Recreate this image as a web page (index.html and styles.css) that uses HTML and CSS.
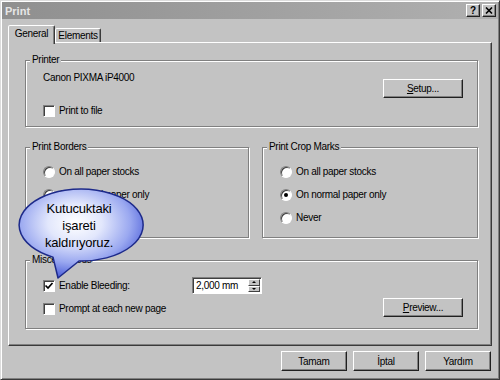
FILE: index.html
```html
<!DOCTYPE html>
<html>
<head>
<meta charset="utf-8">
<title>Print</title>
<link rel="stylesheet" href="styles.css">
</head>
<body>
<div class="window">
  <div class="titlebar">
    <span class="title">Print</span>
    <div class="caption-btns">
      <span class="cbtn help">?</span>
      <span class="cbtn close"><svg width="8" height="7" viewBox="0 0 8 7"><path d="M1 0.5L7 6.5M7 0.5L1 6.5" stroke="#000" stroke-width="1.6"/></svg></span>
    </div>
  </div>
  <div class="content">
    <div class="tabs">
      <div class="tab active">General</div>
      <div class="tab">Elements</div>
    </div>
    <div class="panel">
      <fieldset class="group printer">
        <legend>Printer</legend>
        <div class="printer-row">
          <div class="printer-info">
            <div class="printer-name">Canon PIXMA iP4000</div>
            <div class="check"><span class="box"></span><span>Print to file</span></div>
          </div>
          <button class="btn setup"><u>S</u>etup...</button>
        </div>
      </fieldset>
      <div class="group-row">
        <fieldset class="group borders">
          <legend>Print Borders</legend>
          <div class="radio-list">
            <div class="radio-row"><span class="radio"></span><span>On all paper stocks</span></div>
            <div class="radio-row"><span class="radio"></span><span>On normal paper only</span></div>
            <div class="radio-row"><span class="radio checked"></span><span>Never</span></div>
          </div>
        </fieldset>
        <fieldset class="group crop">
          <legend>Print Crop Marks</legend>
          <div class="radio-list">
            <div class="radio-row"><span class="radio"></span><span>On all paper stocks</span></div>
            <div class="radio-row"><span class="radio checked"></span><span>On normal paper only</span></div>
            <div class="radio-row"><span class="radio"></span><span>Never</span></div>
          </div>
        </fieldset>
      </div>
      <fieldset class="group misc">
        <legend>Miscellaneous</legend>
        <div class="misc-row">
          <div class="check wide"><span class="box checked"><svg width="10" height="10" viewBox="0 0 10 10"><path d="M1.5 4.5L4 7L8.5 2" stroke="#000" stroke-width="1.7" fill="none"/></svg></span><span>Enable Bleeding:</span></div>
          <div class="spinner">
            <span class="spin-value">2,000 mm</span>
            <div class="spin-btns"><span class="spin-btn up"></span><span class="spin-btn down"></span></div>
          </div>
        </div>
        <div class="misc-row second">
          <div class="check prompt"><span class="box"></span><span>Prompt at each new page</span></div>
          <button class="btn"><u>P</u>review...</button>
        </div>
      </fieldset>
    </div>
    <div class="dialog-buttons">
      <button class="btn dbtn">Tamam</button>
      <button class="btn dbtn">İptal</button>
      <button class="btn dbtn">Yardım</button>
    </div>
  </div>
  <div class="callout">
    <svg width="135" height="100" viewBox="0 0 135 100">
      <defs>
        <radialGradient id="bg" cx="0.45" cy="0.38" r="0.62">
          <stop offset="0" stop-color="#ffffff"/>
          <stop offset="0.35" stop-color="#e2e7fc"/>
          <stop offset="0.72" stop-color="#9aa8f0"/>
          <stop offset="1" stop-color="#4d5fd9"/>
        </radialGradient>
      </defs>
      <path d="M37 73.1A62 36 0 1 1 63 77L42 94Z" fill="url(#bg)" stroke="#1d2a8a" stroke-width="1.5" stroke-linejoin="round"/>
    </svg>
    <div class="callout-text">Kutucuktaki<br>işareti<br>kaldırıyoruz.</div>
  </div>
</div>
</body>
</html>
```
FILE: styles.css
```css
* { box-sizing: border-box; }
html, body { margin: 0; padding: 0; }
body {
  width: 500px;
  height: 380px;
  overflow: hidden;
  background: #c3c3c3;
  font-family: "Liberation Sans", Arial, sans-serif;
  font-size: 10px;
  letter-spacing: -0.3px;
  color: #000;
}
.window {
  position: relative;
  width: 500px;
  height: 380px;
  background: #c3c3c3;
  border: 1px solid;
  border-color: #dcdcdc #3a3a3a #3a3a3a #dcdcdc;
  box-shadow: inset 1px 1px #fff, inset -1px -1px #808080;
  padding: 1px;
}
.titlebar {
  height: 17px;
  display: flex;
  align-items: center;
  justify-content: space-between;
  background: linear-gradient(to right, #8f8f8f, #b0b0b0);
  padding: 0 2px 0 3px;
}
.title { font-weight: bold; font-size: 11px; letter-spacing: 0; color: #e6e6e6; }
.caption-btns { display: flex; gap: 2px; }
.cbtn {
  width: 14px;
  height: 13px;
  background: #c3c3c3;
  border: 1px solid;
  border-color: #fff #202020 #202020 #fff;
  box-shadow: inset -1px -1px #808080;
  display: flex;
  align-items: center;
  justify-content: center;
  font-weight: bold;
  font-size: 10px;
  letter-spacing: 0;
  line-height: 1;
}
.content { padding: 6px 6px 0 6px; }
.tabs { display: flex; align-items: flex-end; height: 19px; margin-bottom: -2px; }
.tab {
  width: 46px;
  height: 14px;
  margin-bottom: 2px;
  background: #c3c3c3;
  border: 1px solid;
  border-bottom: none;
  border-color: #fff #3a3a3a transparent #fff;
  border-radius: 2px 2px 0 0;
  box-shadow: inset -1px 0 #808080;
  text-align: center;
  line-height: 13px;
}
.tab.active {
  position: relative;
  z-index: 1;
  width: 47px;
  height: 19px;
  margin-bottom: 0;
  line-height: 16px;
}
.panel {
  height: 304px;
  background: #c3c3c3;
  border: 1px solid;
  border-color: #fff #3a3a3a #3a3a3a #fff;
  box-shadow: inset -1px -1px #808080;
  padding: 11px 13px 0 16px;
  display: flex;
  flex-direction: column;
}
.group {
  margin: 0;
  min-width: 0;
  border: 1px solid #808080;
  box-shadow: inset 1px 1px #fff, 1px 1px #fff;
  padding: 6px 14px 9px 17px;
}
.group legend {
  padding: 0 2px;
  margin-left: -13px;
  line-height: 12px;
  background: #c3c3c3;
}
.printer-row { display: flex; justify-content: space-between; align-items: flex-start; }
.printer-name { line-height: 12px; }
.check { display: flex; align-items: center; gap: 4px; line-height: 12px; }
.printer-info .check { margin-top: 21px; }
.box {
  width: 12px;
  height: 12px;
  flex: none;
  background: #fff;
  border: 1px solid;
  border-color: #808080 #fff #fff #808080;
  box-shadow: inset 1px 1px #404040;
  display: flex;
  align-items: center;
  justify-content: center;
}
.btn {
  width: 80px;
  height: 19px;
  padding: 0;
  margin: 0;
  font: inherit;
  letter-spacing: inherit;
  color: #000;
  background: #c3c3c3;
  border: 1px solid;
  border-color: #fff #202020 #202020 #fff;
  box-shadow: inset -1px -1px #808080;
  text-align: center;
}
.setup { margin-top: 7px; }
.group-row { display: flex; gap: 13px; margin-top: 14px; }
.borders { width: 224px; padding: 13px 10px 13px 17px; }
.crop { flex: 1; padding: 13px 10px 13px 17px; }
.radio-list { display: flex; flex-direction: column; gap: 11px; }
.radio-row { display: flex; align-items: center; gap: 4px; line-height: 12px; height: 12px; }
.radio {
  width: 12px;
  height: 12px;
  flex: none;
  border-radius: 50%;
  background: #fff;
  border: 1px solid;
  border-color: #808080 #fff #fff #808080;
  box-shadow: inset 1px 1px #404040;
  display: flex;
  align-items: center;
  justify-content: center;
}
.radio.checked::after {
  content: "";
  width: 4px;
  height: 4px;
  border-radius: 50%;
  background: #000;
}
.misc { margin-top: 16px; padding: 11px 14px 11px 17px; }
.misc-row { display: flex; align-items: center; }
.misc-row.second { justify-content: space-between; margin-top: 4px; }
.check.wide { width: 149px; }
.check.prompt { margin-top: 3px; }
.spinner {
  width: 70px;
  height: 17px;
  background: #fff;
  border: 1px solid;
  border-color: #808080 #fff #fff #808080;
  box-shadow: inset 1px 1px #404040;
  display: flex;
  align-items: center;
  padding: 1px 1px 1px 3px;
}
.spin-value { flex: 1; line-height: 12px; }
.spin-btns { display: flex; flex-direction: column; width: 12px; height: 13px; }
.spin-btn {
  flex: 1;
  background: #c3c3c3;
  border: 1px solid;
  border-color: #fff #404040 #404040 #fff;
  display: flex;
  align-items: center;
  justify-content: center;
}
.spin-btn.up::after {
  content: "";
  border-left: 2px solid transparent;
  border-right: 2px solid transparent;
  border-bottom: 2px solid #000;
}
.spin-btn.down::after {
  content: "";
  border-left: 2px solid transparent;
  border-right: 2px solid transparent;
  border-top: 2px solid #000;
}
.dialog-buttons {
  display: flex;
  justify-content: flex-end;
  gap: 6px;
  margin-top: 5px;
  padding-right: 1px;
}
.dbtn { width: 66px; height: 20px; }
.callout {
  position: absolute;
  left: 15px;
  top: 183px;
  width: 135px;
  height: 100px;
}
.callout svg { display: block; }
.callout-text {
  position: absolute;
  left: 0;
  top: 16px;
  width: 126px;
  text-align: center;
  font-size: 13px;
  line-height: 17px;
  letter-spacing: -0.2px;
}
```
